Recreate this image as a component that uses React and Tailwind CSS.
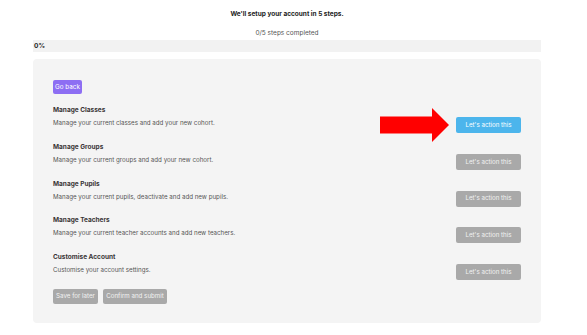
import React from "react";

const steps = [
  { title: "Manage Classes", desc: "Manage your current classes and add your new cohort.", active: true },
  { title: "Manage Groups", desc: "Manage your current groups and add your new cohort." },
  { title: "Manage Pupils", desc: "Manage your current pupils, deactivate and add new pupils." },
  { title: "Manage Teachers", desc: "Manage your current teacher accounts and add new teachers." },
  { title: "Customise Account", desc: "Customise your account settings." },
];

export default function App() {
  return (
    <div
      className="w-[587px] h-[335px] bg-white text-[#333]"
      style={{ fontFamily: "Inter, 'Noto Sans', sans-serif" }}
    >
      <div className="ml-[33px] w-[508px] pt-[9px]">
        <div className="text-center text-[6.5px] leading-[10px] font-bold text-[#222]">
          We'll setup your account in 5 steps.
        </div>
        <div className="text-center text-[6.5px] leading-[10px] text-[#555] mt-[9px]">
          0/5 steps completed
        </div>
        <div className="mt-[2px] h-[12px] bg-[#f2f2f2] flex items-center px-[1px]">
          <span className="text-[6.5px] font-bold text-[#222] leading-none">0%</span>
        </div>
        <div className="relative mt-[7px] bg-[#f4f4f4] rounded-[4px] pl-[20px] pr-[20px] pt-[21px] pb-[19px]">
          <button className="h-[14px] w-[29px] rounded-[2px] bg-[#8d6ef3] text-white text-[6.3px] leading-none flex items-center justify-center">
            Go back
          </button>
          <div className="mt-[10px] flex flex-col gap-[7.75px]">
            {steps.map((s) => (
              <div key={s.title}>
                <div className="pt-[1px] h-[10px] text-[6.5px] leading-[10px] font-bold text-[#3a3436]">{s.title}</div>
                <div className="mt-[3px] flex items-start justify-between">
                  <div className="pt-[1px] text-[6.2px] leading-[10px] text-[#555555]">{s.desc}</div>
                  <button
                    className={
                      "h-[16px] w-[65px] rounded-[2px] text-[6.2px] leading-none flex items-center justify-center " +
                      (s.active ? "bg-[#4cb5ec] text-white" : "bg-[#a9a9a9] text-[#f2f2f2]")
                    }
                  >
                    Let's action this
                  </button>
                </div>
              </div>
            ))}
          </div>
          <div className="mt-[9px] flex gap-[5px]">
            <button className="h-[15px] w-[45px] rounded-[2px] bg-[#a9a9a9] text-[#f2f2f2] text-[6.2px] leading-none flex items-center justify-center">
              Save for later
            </button>
            <button className="h-[15px] w-[64px] rounded-[2px] bg-[#a9a9a9] text-[#f2f2f2] text-[6.2px] leading-none flex items-center justify-center">
              Confirm and submit
            </button>
          </div>
          <svg
            className="absolute left-[347px] top-[49px]"
            width="69"
            height="34"
            viewBox="0 0 69 34"
          >
            <polygon points="0,8.5 52,8.5 52,0 69,17 52,34 52,25.5 0,25.5" fill="#ff0000" />
          </svg>
        </div>
      </div>
    </div>
  );
}
